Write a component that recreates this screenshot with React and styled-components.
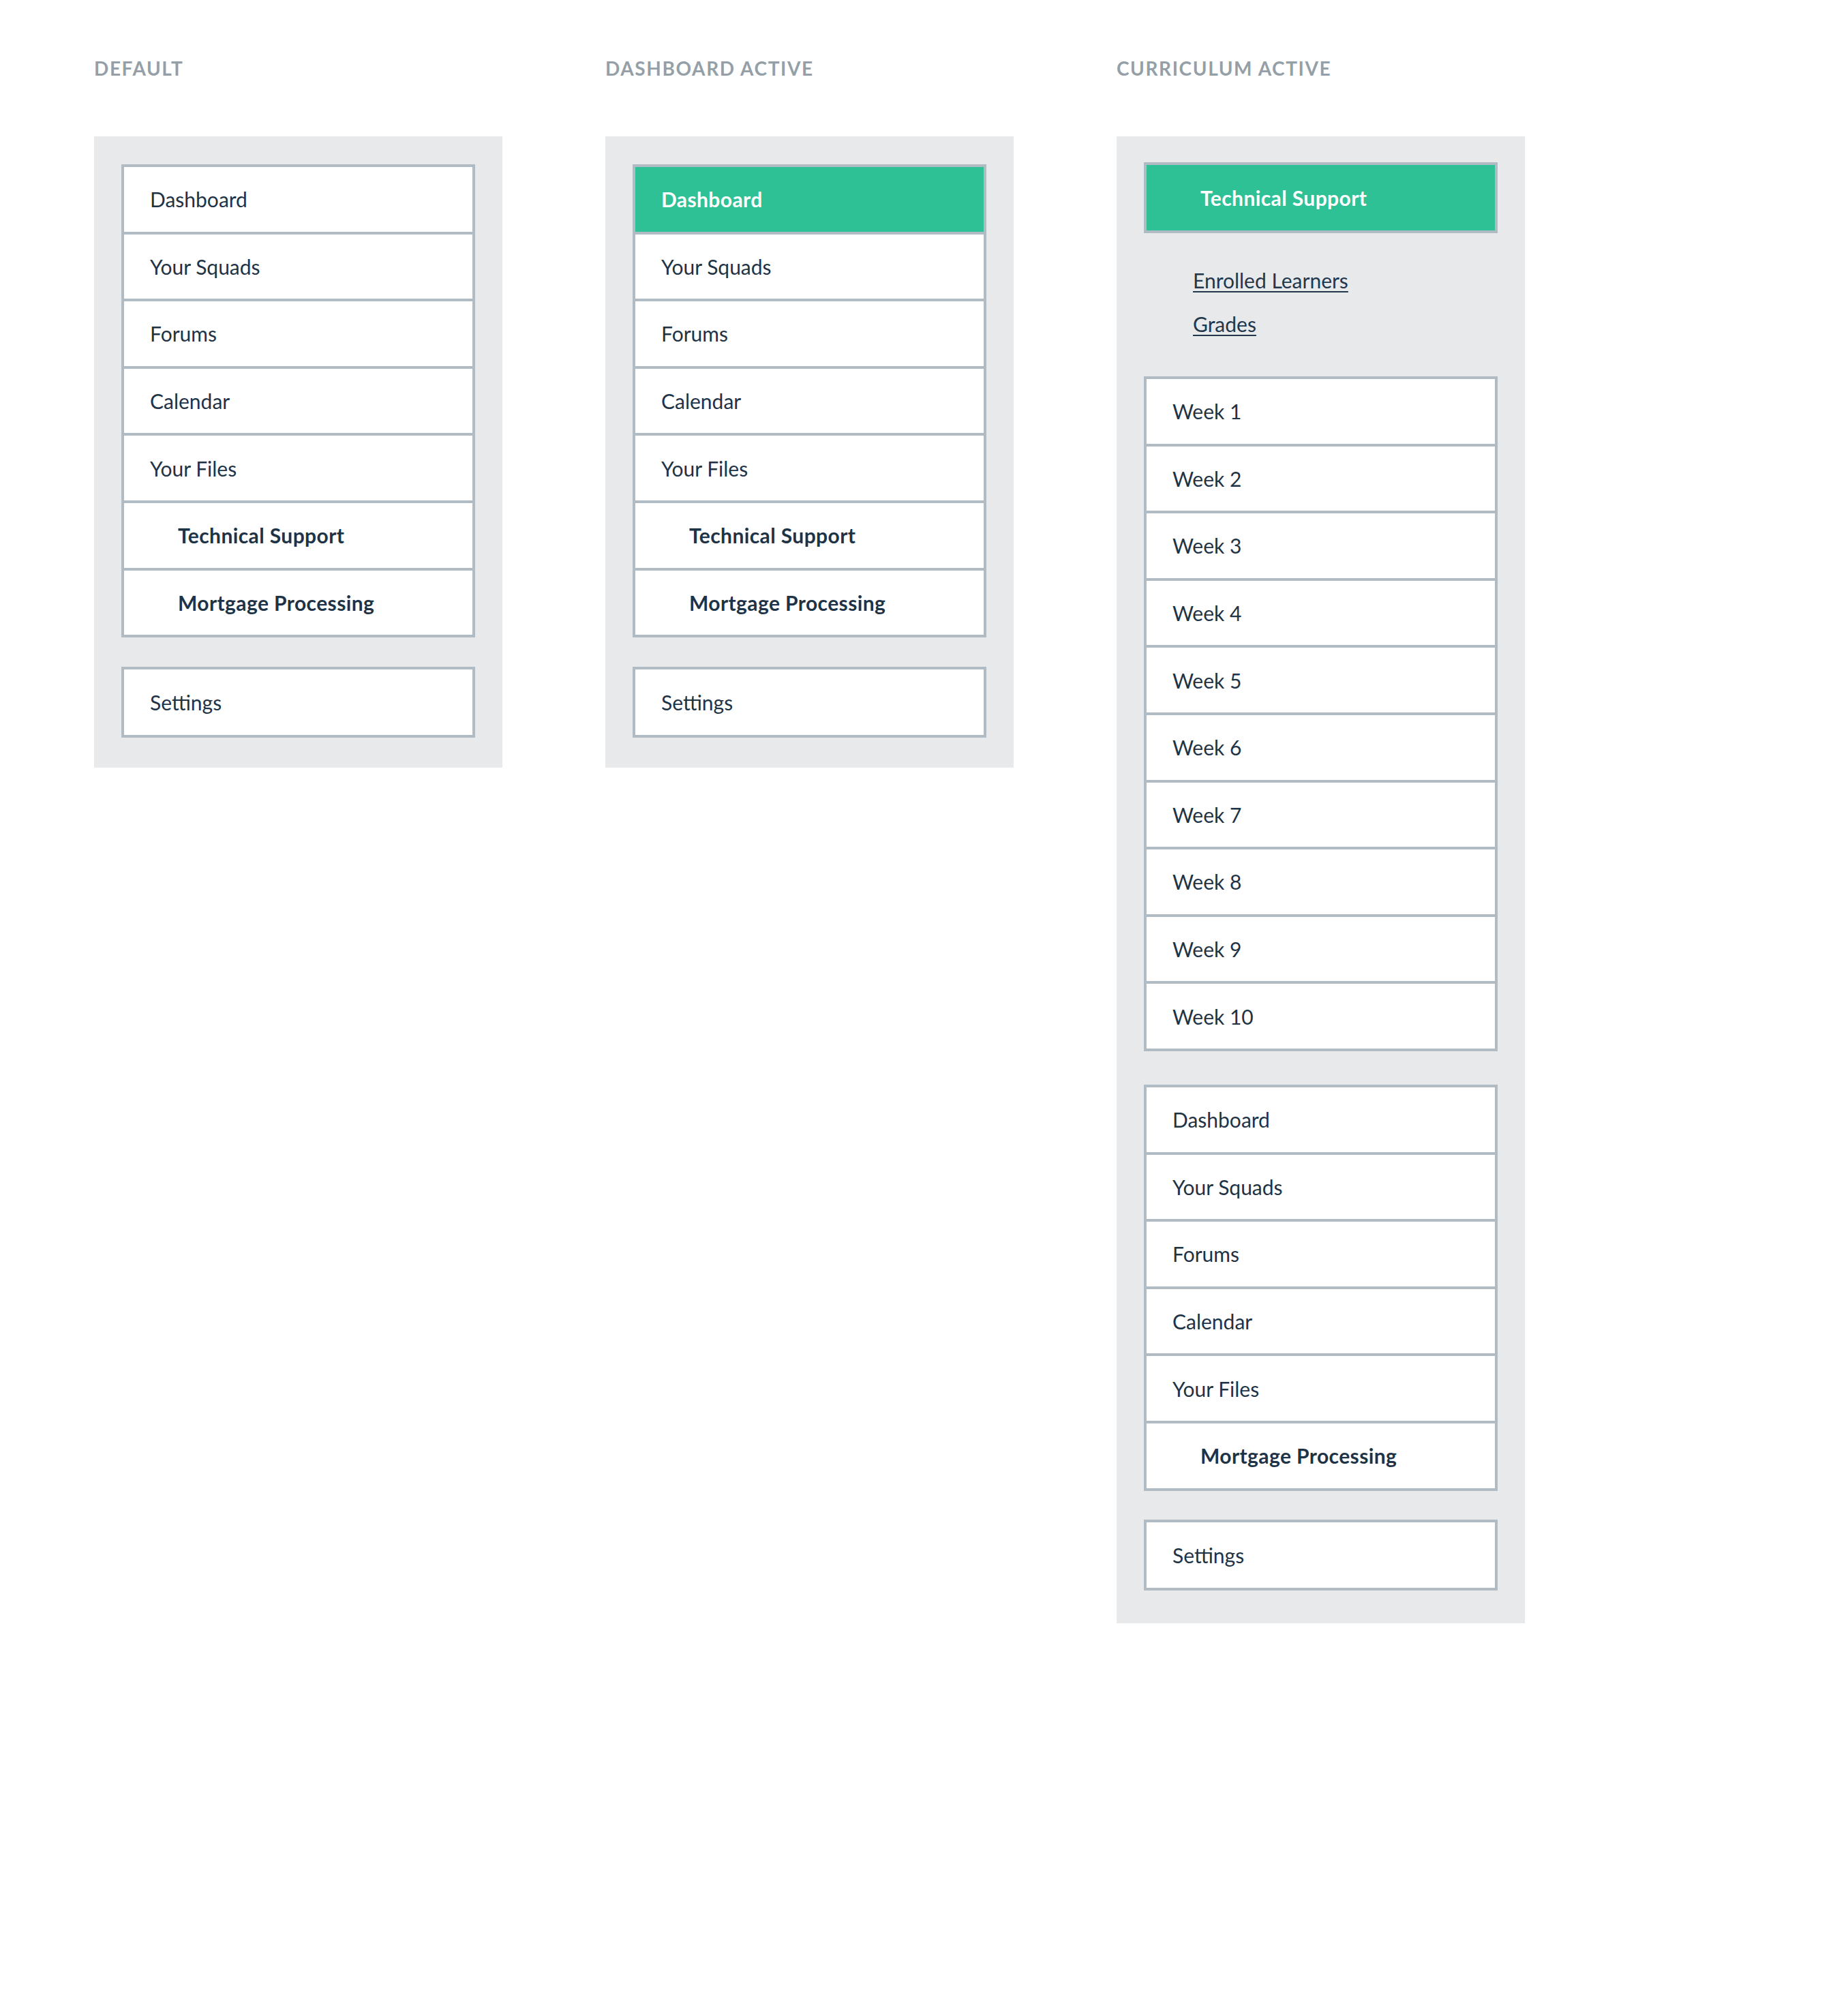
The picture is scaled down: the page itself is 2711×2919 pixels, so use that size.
import React from 'react'
import styled, { createGlobalStyle } from 'styled-components'

const GlobalStyle = createGlobalStyle`
    html, body {
        margin: 0;
        padding: 0;
        background: #ffffff;
    }
    body {
        font-family: Lato, "Open Sans", "Liberation Sans", sans-serif;
        color: #1f3346;
    }
`

const Page = styled.div`
    display: flex;
    align-items: flex-start;
    gap: 151px;
    padding: 84px 0 0 138px;
    width: 2711px;
    min-height: 2919px;
    box-sizing: border-box;
`

const Column = styled.section`
    width: 599px;
    display: flex;
    flex-direction: column;
`

const Label = styled.h2`
    margin: 0 0 84px;
    font-size: 28px;
    line-height: 32px;
    font-weight: 700;
    letter-spacing: 1.6px;
    text-transform: uppercase;
    color: #949fa8;
`

const Panel = styled.div`
    background: #e8e9eb;
    padding: ${(p) => p.$top || 41}px 40px ${(p) => p.$bottom || 44}px;
    display: flex;
    flex-direction: column;
`

const List = styled.ul`
    list-style: none;
    margin: 0 0 ${(p) => p.$gap || 0}px;
    padding: 0;
    background: #ffffff;
    border: 4px solid #b1bbc4;
`

const Row = styled.li`
    height: ${(p) => (p.$single ? 96 : 94.6)}px;
    display: flex;
    align-items: center;
    box-sizing: content-box;
    padding-left: ${(p) => (p.$indent ? 79 : 38)}px;
    font-size: 30px;
    font-weight: ${(p) => (p.$bold || p.$active ? 700 : 400)};
    letter-spacing: ${(p) => (p.$bold || p.$active ? 0.4 : 0)}px;
    color: ${(p) => (p.$active ? '#ffffff' : '#1f3346')};
    background: ${(p) => (p.$active ? '#2ec196' : 'transparent')};
    & + & {
        border-top: 4px solid #b1bbc4;
    }
`

const Links = styled.div`
    display: flex;
    flex-direction: column;
    padding: 37px 0 45px 72px;
`

const SubLink = styled.a`
    font-size: 30px;
    line-height: 64px;
    color: #23374c;
    text-decoration: underline;
    text-decoration-thickness: 2px;
    text-underline-offset: 4px;
    align-self: flex-start;
`

const mainItems = ['Dashboard', 'Your Squads', 'Forums', 'Calendar', 'Your Files']
const weeks = Array.from({ length: 10 }, (_, i) => `Week ${i + 1}`)

function MainMenu({ active, gap, withTech = true }) {
  return (
    <List $gap={gap}>
      {mainItems.map((item) => (
        <Row key={item} $active={active === item}>
          {item}
        </Row>
      ))}
      {withTech && (
        <Row $indent $bold>
          Technical Support
        </Row>
      )}
      <Row $indent $bold>
        Mortgage Processing
      </Row>
    </List>
  )
}

function SettingsBox() {
  return (
    <List>
      <Row $single>Settings</Row>
    </List>
  )
}

export default function App() {
  return (
    <>
      <GlobalStyle />
      <Page>
        <Column>
          <Label>Default</Label>
          <Panel>
            <MainMenu gap={43} />
            <SettingsBox />
          </Panel>
        </Column>

        <Column>
          <Label>Dashboard Active</Label>
          <Panel>
            <MainMenu active="Dashboard" gap={43} />
            <SettingsBox />
          </Panel>
        </Column>

        <Column>
          <Label>Curriculum Active</Label>
          <Panel $top={38} $bottom={48}>
            <List>
              <Row $single $indent $active>
                Technical Support
              </Row>
            </List>
            <Links>
              <SubLink href="#">Enrolled Learners</SubLink>
              <SubLink href="#">Grades</SubLink>
            </Links>
            <List $gap={49}>
              {weeks.map((w) => (
                <Row key={w}>{w}</Row>
              ))}
            </List>
            <MainMenu gap={42} withTech={false} />
            <SettingsBox />
          </Panel>
        </Column>
      </Page>
    </>
  )
}
